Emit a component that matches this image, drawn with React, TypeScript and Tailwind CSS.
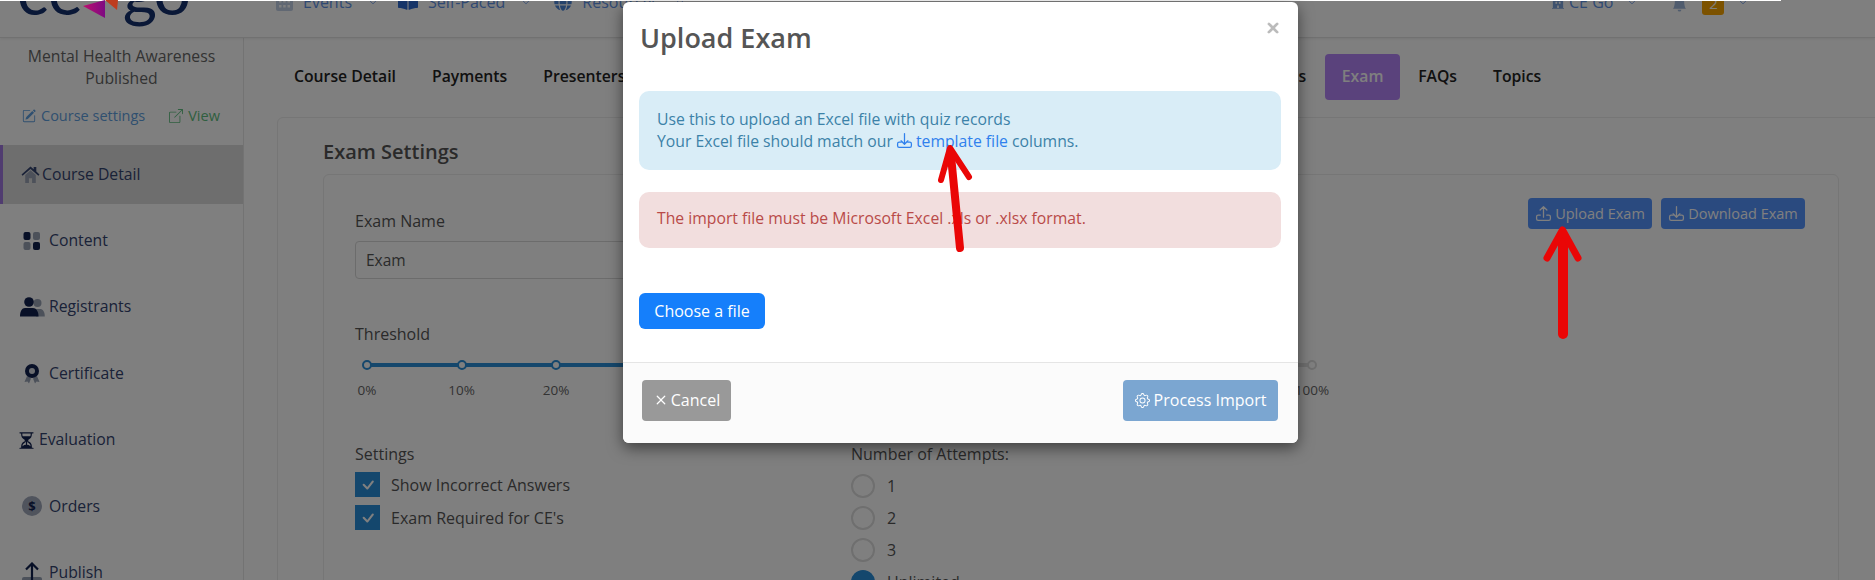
import { BsBoxArrowUpRight, BsChevronDown, BsGear, BsHourglassSplit, BsPencilSquare, BsX, BsBellFill, BsCheck } from "react-icons/bs";
import { FaBookOpen, FaGlobe, FaBuilding } from "react-icons/fa";

function Tray({ up, className }: { up?: boolean; className?: string }) {
  return (
    <svg viewBox="0 0 16 16" fill="none" stroke="currentColor" strokeWidth="1.2" strokeLinecap="round" strokeLinejoin="round" className={className}>
      <path d="M5 9.5H3a1.5 1.5 0 0 0-1.500 1.500v2A1.500 1.500 0 0 0 3 14.500h10a1.500 1.500 0 0 0 1.500-1.500v-2A1.500 1.500 0 0 0 13 9.500h-2" />
      {up ? <path d="M8 11.500V1.500M4.800 4.700 8 1.500l3.200 3.200" /> : <path d="M8 1.500v10M4.800 8.300 8 11.500l3.200-3.200" />}
    </svg>
  );
}

function HomeIcon() {
  return (
    <svg viewBox="0 0 18 16" className="h-[17px] w-[19px]">
      <path d="M4 8.500 9 4l5 4.500V16h-3.500v-4.500h-3V16H4z" fill="#9aa3b4" />
      <path d="M0.500 8 9 0.500 12 3V1h2.500v4.200L17.500 8l-1 1.200L9 2.800 1.500 9.200z" fill="#344470" />
    </svg>
  );
}
function ContentIcon() {
  return (
    <svg viewBox="0 0 18 18" className="h-[20px] w-[18px]">
      <rect x="0.500" y="0" width="7" height="8" rx="2" fill="#10204f" />
      <rect x="10" y="0" width="7" height="8" rx="2" fill="#98a2b5" />
      <rect x="0.500" y="10" width="7" height="8" rx="2" fill="#98a2b5" />
      <rect x="10" y="10" width="7" height="8" rx="2" fill="#10204f" />
    </svg>
  );
}
function PeopleIcon() {
  return (
    <svg viewBox="0 0 25 20" className="h-[20px] w-[25px]">
      <circle cx="17.500" cy="6" r="4" fill="#98a2b5" />
      <path d="M14 12h6c2.800 0 4.800 2.500 4.800 7.500H16z" fill="#98a2b5" />
      <circle cx="9" cy="5" r="4.800" fill="#10204f" />
      <path d="M5 11h8c3 0 5.500 3 5.500 8.500H0C0 14 2 11 5 11z" fill="#10204f" />
    </svg>
  );
}
function AwardIcon() {
  return (
    <svg viewBox="0 0 16 20" className="h-[20px] w-[16px]">
      <path d="M3 12 0.500 18l3-.500 1.500 2 2-5zM13 12l2.500 6-3-.500-1.500 2-2-5z" fill="#98a2b5" />
      <circle cx="8" cy="7" r="7" fill="#10204f" />
      <circle cx="8" cy="7" r="3" fill="#d8dbe3" />
    </svg>
  );
}
function DollarIcon() {
  return (
    <div className="flex h-[20px] w-[20px] items-center justify-center rounded-full bg-[#a0a8bb] text-[13px] font-bold leading-none text-[#10204f]">$</div>
  );
}
function PublishIcon() {
  return (
    <svg viewBox="0 0 20 22" className="h-[22px] w-[20px]">
      <rect x="0" y="15" width="20" height="7" rx="2" fill="#98a2b5" />
      <path d="M10 18V2M4 7.500 10 1.500l6 6" fill="none" stroke="#10204f" strokeWidth="2.200" />
    </svg>
  );
}

function NavItem({ icon, label, left }: { icon: React.ReactNode; label: string; left: string }) {
  return (
    <div className={`flex h-[30px] items-center ${left}`}>
      {icon}
      <span className="ml-[10px] text-[16px] text-[#5f92e6]">{label}</span>
      <BsChevronDown className="ml-[16px] h-[10px] w-[10px] text-[#5f92e6]" />
    </div>
  );
}

function CalendarIcon() {
  return (
    <svg viewBox="0 0 17 17" className="h-[17px] w-[17px]">
      <rect width="17" height="17" rx="2" fill="#c2d0e6" />
      <g fill="#ffffff">
        <rect x="3" y="6" width="2.500" height="2.500" />
        <rect x="7.200" y="6" width="2.500" height="2.500" />
        <rect x="11.500" y="6" width="2.500" height="2.500" />
        <rect x="3" y="11" width="2.500" height="2.500" />
        <rect x="7.200" y="11" width="2.500" height="2.500" />
        <rect x="11.500" y="11" width="2.500" height="2.500" />
      </g>
    </svg>
  );
}

const sideItems: { label: string; icon: React.ReactNode; pad: string; gap: string }[] = [
  { label: "Course Detail", icon: <HomeIcon />, pad: "pl-[17px]", gap: "ml-[2px]" },
  { label: "Content", icon: <ContentIcon />, pad: "pl-[23px]", gap: "ml-[8px]" },
  { label: "Registrants", icon: <PeopleIcon />, pad: "pl-[20px]", gap: "ml-[4px]" },
  { label: "Certificate", icon: <AwardIcon />, pad: "pl-[24px]", gap: "ml-[9px]" },
  { label: "Evaluation", icon: <BsHourglassSplit className="h-[19px] w-[19px] text-[#10204f]" />, pad: "pl-[17px]", gap: "ml-[3px]" },
  { label: "Orders", icon: <DollarIcon />, pad: "pl-[22px]", gap: "ml-[7px]" },
  { label: "Publish", icon: <PublishIcon />, pad: "pl-[22px]", gap: "ml-[7px]" },
];

const ticks = ["0%", "10%", "20%", "30%", "40%", "50%", "60%", "70%", "80%", "90%", "100%"];

function Arrow({ className, shaft, head, w, h, shaftWidth, headWidth }: { className: string; shaft: string; head: string; w: number; h: number; shaftWidth: number; headWidth: number }) {
  return (
    <svg width={w} height={h} viewBox={`0 0 ${w} ${h}`} className={className} fill="none" stroke="#ea0606" strokeLinecap="round" strokeLinejoin="round">
      <path d={shaft} strokeWidth={shaftWidth} />
      <path d={head} strokeWidth={headWidth} />
    </svg>
  );
}

export default function App() {
  return (
    <div className="relative h-[580px] w-[1875px] overflow-hidden bg-white font-['Open_Sans','Noto_Sans',sans-serif] text-[15.750px] text-[#444]">
      <header className="relative flex h-[38px] items-start overflow-hidden border-b border-[#e2e2e2] shadow-[0_1px_3px_rgba(0,0,0,0.08)]">
        <div className="-mt-[45px] ml-[17px] flex h-[70px] w-[174px] items-center font-['Lato',sans-serif] text-[66px] font-normal leading-none text-[#14306f]">
          <span>ce</span>
          <svg viewBox="0 0 36 18" className="relative z-10 mr-[4px] mt-[45px] h-[18px] w-[36px] shrink-0 self-start">
            <defs>
              <linearGradient id="tri" x1="0" x2="1" y1="0" y2="0">
                <stop offset="0" stopColor="#be0f6e" />
                <stop offset="1" stopColor="#7d0a82" />
              </linearGradient>
            </defs>
            <path d="M0 6 22 0v18z" fill="url(#tri)" />
            <path d="M22 0H35L34 10z" fill="#be3c1e" />
          </svg>
          <span className="tracking-[-3px]">go</span>
        </div>
        <div className="-mt-[13px] flex items-start">
          <NavItem left="ml-[85px]" icon={<CalendarIcon />} label="Events" />
          <NavItem left="ml-[20px]" icon={<FaBookOpen className="h-[18px] w-[20px] text-[#2e6bd0]" />} label="Self-Paced" />
          <NavItem left="ml-[23px]" icon={<FaGlobe className="h-[18px] w-[18px] text-[#4d86d8]" />} label="Resources" />
        </div>
        <div className="-mt-[13px] ml-[867px] flex items-start">
          <div className="flex h-[30px] items-center">
            <FaBuilding className="h-[14px] w-[12px] text-[#7fa5dc]" />
            <span className="ml-[5px] text-[16px] text-[#5f92e6]">CE Go</span>
            <BsChevronDown className="ml-[14px] h-[10px] w-[10px] text-[#5f92e6]" />
          </div>
          <div className="ml-[35px] flex h-[30px] items-center">
            <BsBellFill className="mt-[3px] h-[16px] w-[15px] text-[#a0b8dc]" />
          </div>
          <div className="ml-[15px] flex h-[28px] w-[22px] items-center justify-center rounded-[3px] bg-[#f9a400] pt-[5px] text-[15px] text-white">2</div>
          <BsChevronDown className="ml-[14px] mt-[10px] h-[10px] w-[10px] text-[#5f92e6]" />
        </div>
      </header>

      <div className="flex h-[542px]">
        <aside className="w-[244px] shrink-0 border-r border-[#e6e6e6]">
          <div className="pt-[7px] text-center text-[15.750px] leading-[22px] text-[#666]">
            <div>Mental Health Awareness</div>
            <div>Published</div>
          </div>
          <div className="mt-[16px] flex h-[22px] items-center pl-[22px] text-[14.500px]">
            <BsPencilSquare className="h-[14px] w-[14px] text-[#5fa0e0]" />
            <span className="ml-[5px] text-[#5fa0e0]">Course settings</span>
            <BsBoxArrowUpRight className="ml-[24px] h-[14px] w-[14px] text-[#5fbf80]" />
            <span className="ml-[5px] text-[#5fbf80]">View</span>
          </div>
          <nav className="mt-[18px] flex flex-col gap-[7.400px]">
            {sideItems.map((it, i) => (
              <div key={it.label} className={`flex h-[59px] items-center text-[15.750px] text-[#344470] ${it.pad} ${i === 0 ? "border-l-[3px] !pl-[18px] border-[#a078e0] bg-[#dcdcdc]" : ""}`}>
                <span className="flex items-center">{it.icon}</span>
                <span className={it.gap}>{it.label}</span>
              </div>
            ))}
          </nav>
        </aside>

        <main className="min-w-0 flex-1">
          <div className="flex items-center pl-[32px] pt-[16px] text-[15.750px] font-semibold text-[#222]">
            <a className="flex h-[46px] items-center px-[18px]">Course Detail</a>
            <a className="flex h-[46px] items-center px-[18px]">Payments</a>
            <a className="flex h-[46px] items-center px-[18px]">Presenters</a>
            <a className="ml-[557px] flex h-[46px] items-center px-[18px]">Evaluations</a>
            <a className="ml-[1px] flex h-[46px] w-[75px] items-center justify-center rounded-[4px] bg-[#b484f8] text-white">Exam</a>
            <a className="flex h-[46px] items-center px-[18px]">FAQs</a>
            <a className="flex h-[46px] items-center px-[18px]">Topics</a>
          </div>

          <section className="ml-[33px] mt-[17px] w-[1700px] rounded-[6px] border border-[#ececec] pl-[45px]">
            <h2 className="flex h-[56px] items-center pt-[12px] text-[20px] font-semibold text-[#555]">Exam Settings</h2>
            <div className="h-[420px] w-[1516px] rounded-[6px] border border-[#ececec] pl-[32px] pr-[33px] pt-[36px]">
              <div className="flex items-start">
                <div className="w-[495px] -ml-[1px]">
                  <label className="block text-[16px] font-medium leading-[20px] text-[#555]">Exam Name</label>
                  <div className="mt-[10px] flex h-[38px] items-center rounded-[4px] border border-[#d8d8d8] pl-[10px] pt-[2px] text-[15.500px] text-[#555]">Exam</div>
                </div>
                <div className="-mt-[13px] ml-auto flex gap-[9px] text-[14.500px] text-white">
                  <button className="flex h-[31px] w-[124px] items-center justify-center gap-[3px] rounded-[4px] bg-[#5494ff]">
                    <Tray up className="h-[17px] w-[17px]" />Upload Exam
                  </button>
                  <button className="flex h-[31px] w-[144px] items-center justify-center gap-[3px] rounded-[4px] bg-[#5494ff]">
                    <Tray className="h-[17px] w-[17px]" />Download Exam
                  </button>
                </div>
              </div>

              <div className="-ml-[1px] mt-[45px] text-[16px] font-medium leading-[20px] text-[#555]">Threshold</div>
              <div className="relative ml-[11px] mt-[16px] w-[945px]">
                <div className="absolute left-0 right-0 top-[3px] h-[4px] rounded bg-[#e0e0e0]" />
                <div className="absolute left-0 top-[3px] h-[4px] w-[80%] bg-[#2a8fd8]" />
                <div className="relative flex justify-between">
                  {ticks.map((t, i) => (
                    <span key={t} className="flex w-0 justify-center">
                      <span className={`h-[10px] w-[10px] shrink-0 rounded-full border-[2.500px] bg-white ${i === 10 ? "border-[#dedede]" : "border-[#2a8fd8]"}`} />
                    </span>
                  ))}
                </div>
                <div className="mt-[10px] flex justify-between text-[13.500px] leading-[20px] text-[#666]">
                  {ticks.map((t) => (
                    <span key={t} className="flex w-0 justify-center">{t}</span>
                  ))}
                </div>
              </div>

              <div className="-ml-[1px] mt-[44px] flex text-[16px] font-medium text-[#555]">
                <div className="w-[496px]">
                  <div className="leading-[20px]">Settings</div>
                  <div className="mt-[8px] flex flex-col gap-[8px]">
                    {["Show Incorrect Answers", "Exam Required for CE's"].map((l) => (
                      <div key={l} className="flex h-[25px] items-center">
                        <span className="flex h-[25px] w-[25px] items-center justify-center bg-[#288eda] text-white"><BsCheck className="h-[22px] w-[22px]" /></span>
                        <span className="ml-[11px]">{l}</span>
                      </div>
                    ))}
                  </div>
                </div>
                <div>
                  <div className="leading-[20px]">Number of Attempts:</div>
                  <div className="mt-[10px] flex flex-col gap-[8px]">
                    {["1", "2", "3", "Unlimited"].map((l, i) => (
                      <div key={l} className="flex h-[24px] items-center">
                        <span className={`h-[24px] w-[24px] rounded-full ${i === 3 ? "bg-[#288eda]" : "border-2 border-[#dedede] bg-white"}`} />
                        <span className="ml-[12px]">{l}</span>
                      </div>
                    ))}
                  </div>
                </div>
              </div>
            </div>
          </section>
        </main>
      </div>

      <div className="absolute inset-0 bg-black/50" />
      <div className="absolute left-0 top-0 h-[1px] w-[1781px] bg-white" />

      <div className="absolute left-[623px] top-[2px] h-[441px] w-[675px] overflow-hidden rounded-[6px] bg-white shadow-[0_5px_15px_rgba(0,0,0,0.5)]">
        <div className="flex h-[89px] items-start justify-between pl-[17px] pr-[14px]">
          <h1 className="mt-[19px] text-[27px] font-semibold leading-[34px] text-[#555]">Upload Exam</h1>
          <BsX className="mt-[15px] h-[22px] w-[22px] text-[#bbb]" strokeWidth="1" />
        </div>
        <div className="mx-[16px] flex h-[79px] w-[642px] flex-col justify-center rounded-[10px] bg-[#d9edf7] pb-[2px] pl-[18px] text-[15.750px] leading-[22px] text-[#3c82a8]">
          <div>Use this to upload an Excel file with quiz records</div>
          <div className="flex items-center">
            Your Excel file should match our
            <a className="ml-[3px] flex items-center text-[#2f80ed]"><Tray className="mr-[3px] h-[17px] w-[17px]" />template file</a>
            <span className="ml-[4px]">columns.</span>
          </div>
        </div>
        <div className="mx-[16px] mt-[22px] flex h-[56px] w-[642px] items-center rounded-[10px] bg-[#f2dede] pb-[2px] pl-[18px] text-[15.750px] text-[#b94a48]">
          The import file must be Microsoft Excel .xls or .xlsx format.
        </div>
        <button className="ml-[16px] mt-[45px] block h-[36px] w-[126px] rounded-[6px] bg-[#157ffb] text-[16px] font-medium text-white">Choose a file</button>
        <div className="mt-[33px] flex h-[81px] items-start justify-between border-t border-[#e5e5e5] bg-[#fbfbfb] pl-[19px] pr-[20px] pt-[17px] text-[16px] text-white">
          <button className="flex h-[41px] w-[89px] items-center justify-center rounded-[4px] bg-[#999] pb-[1px] pr-[2px]"><BsX className="h-[20px] w-[20px]" />Cancel</button>
          <button className="flex h-[41px] w-[155px] items-center justify-center gap-[4px] rounded-[4px] bg-[#7ba6d1] pb-[1px]"><BsGear className="h-[15px] w-[15px]" />Process Import</button>
        </div>
      </div>

      <Arrow className="absolute left-[932px] top-[142px]" w={44} h={112} shaftWidth={8} headWidth={6} shaft="M19 14 28 106" head="M9 38 18 6 37 35" />
      <Arrow className="absolute left-[1541px] top-[222px]" w={44} h={120} shaftWidth={10} headWidth={7} shaft="M22 14V112" head="M6 36 21.500 8 37 36" />
    </div>
  );
}
